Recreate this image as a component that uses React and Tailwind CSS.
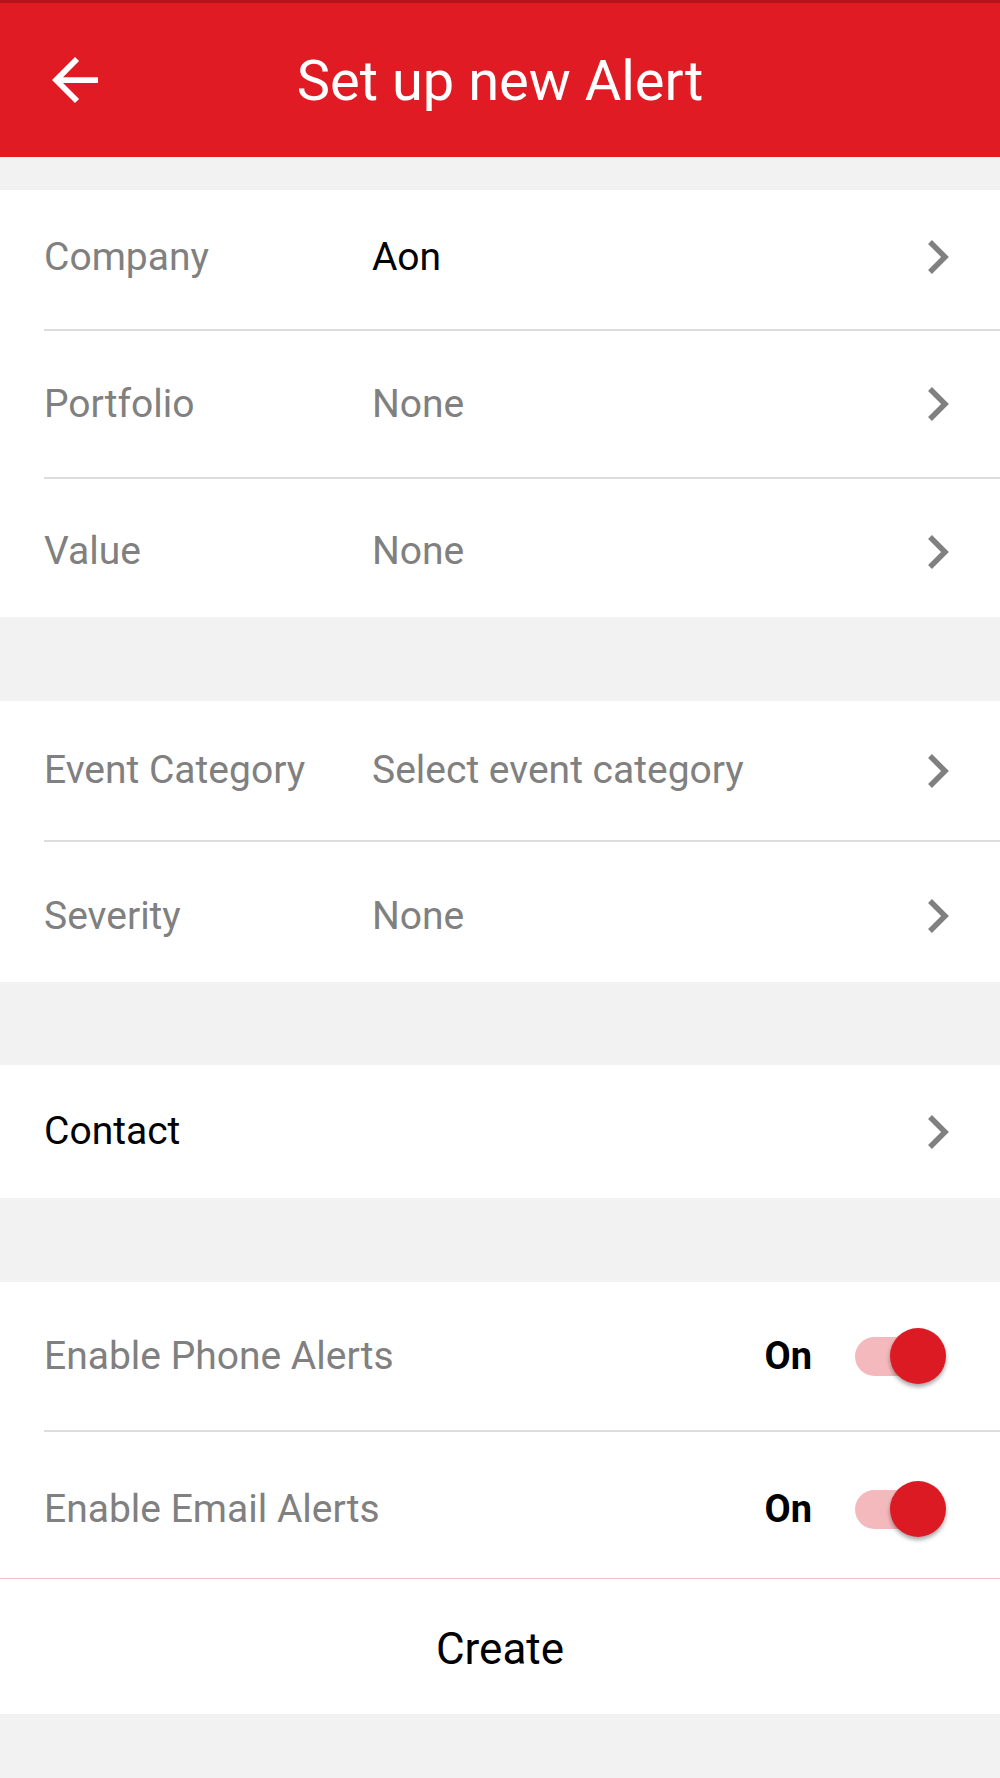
import React from "react";

const font = { fontFamily: "Roboto, 'Noto Sans', sans-serif" };

function Chevron() {
  return (
    <svg width="24" height="34" viewBox="0 0 24 34" className="shrink-0">
      <polyline points="4,2 19,17 4,32" fill="none" stroke="#808080" strokeWidth="5.5" strokeLinejoin="miter" strokeLinecap="butt" />
    </svg>
  );
}

function BackArrow() {
  return (
    <svg width="46" height="46" viewBox="4 4 16 16">
      <path d="M20 11H7.83l5.59-5.59L12 4l-8 8 8 8 1.41-1.41L7.83 13H20v-2z" fill="#ffffff" />
    </svg>
  );
}

function Divider() {
  return (
    <div className="pl-[44px]">
      <div className="h-[2px] bg-[#dcdcdc]" />
    </div>
  );
}

function SelectRow({ label, value, valueDark, h, extra = "" }) {
  return (
    <div className={`flex items-center pl-[44px] pr-[50px] ${h} ${extra}`}>
      <div className="w-[328px] text-[39px] text-[#808080] leading-none">{label}</div>
      <div className={`flex-1 text-[39px] leading-none ${valueDark ? "text-black" : "text-[#808080]"}`}>{value}</div>
      <Chevron />
    </div>
  );
}

function Toggle() {
  return (
    <div className="relative w-[91px] h-[56px] shrink-0">
      <div className="absolute left-0 top-[9px] w-[80px] h-[39px] rounded-full bg-[#f4b9bc]" />
      <div className="absolute right-0 top-0 w-[56px] h-[56px] rounded-full bg-[#dc1a23] shadow-[0_3px_4px_rgba(0,0,0,0.35)]" />
    </div>
  );
}

function ToggleRow({ label, h, extra = "" }) {
  return (
    <div className={`flex items-center pl-[44px] pr-[54px] ${h} ${extra}`}>
      <div className="flex-1 text-[39px] text-[#808080] leading-none">{label}</div>
      <div className="text-[38px] font-bold text-black leading-none mr-[43px]">On</div>
      <Toggle />
    </div>
  );
}

export default function App() {
  return (
    <div style={font} className="w-[1000px] min-h-[1778px] bg-[#f2f2f2] flex flex-col">
      <div className="h-[157px] bg-[#e01b23] border-t-[3px] border-[#b3141a] grid grid-cols-[150px_1fr_150px] items-center">
        <div className="pl-[52px] flex items-center">
          <BackArrow />
        </div>
        <div className="text-center text-white text-[56px] leading-none pt-[2px]">Set up new Alert</div>
        <div />
      </div>

      <div className="h-[33px]" />

      <div className="bg-white">
        <SelectRow label="Company" value="Aon" valueDark h="h-[139px]" extra="pb-[5px]" />
        <Divider />
        <SelectRow label="Portfolio" value="None" h="h-[146px]" />
        <Divider />
        <SelectRow label="Value" value="None" h="h-[138px]" extra="pt-[7px]" />
      </div>

      <div className="h-[84px]" />

      <div className="bg-white">
        <SelectRow label="Event Category" value="Select event category" h="h-[139px]" />
        <Divider />
        <SelectRow label="Severity" value="None" h="h-[140px]" extra="pt-[8px]" />
      </div>

      <div className="h-[83px]" />

      <div className="bg-white h-[133px] flex items-center pl-[44px] pr-[50px]">
        <div className="flex-1 text-[39px] text-black leading-none">Contact</div>
        <Chevron />
      </div>

      <div className="h-[84px]" />

      <div className="bg-white">
        <ToggleRow label="Enable Phone Alerts" h="h-[148px]" />
        <Divider />
        <ToggleRow label="Enable Email Alerts" h="h-[146px]" extra="pt-[8px]" />
        <div className="h-px bg-[#f0c2c5]" />
        <div className="h-[135px] flex items-center justify-center pt-[5px]">
          <span className="text-[44px] text-black leading-none">Create</span>
        </div>
      </div>

      <div className="flex-1" />
    </div>
  );
}
